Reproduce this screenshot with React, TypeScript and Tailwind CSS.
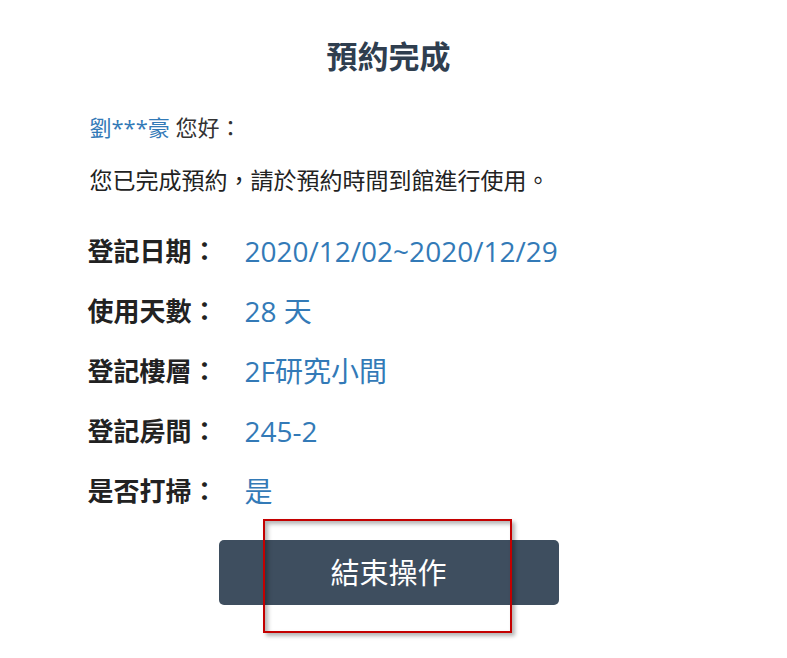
import React from "react";

const CJK = "font-['Open_Sans','Noto_Sans_CJK_TC',sans-serif]";

const rows: { label: string; value: string }[] = [
  { label: "登記日期", value: "2020/12/02~2020/12/29" },
  { label: "使用天數", value: "28 天" },
  { label: "登記樓層", value: "2F研究小間" },
  { label: "登記房間", value: "245-2" },
  { label: "是否打掃", value: "是" },
];

export default function App() {
  return (
    <div className={`min-h-[658px] w-full bg-white ${CJK}`}>
      <div className="mx-auto flex w-[602px] -translate-x-[5px] flex-col pt-[36px]">
        {/* 標題 */}
        <h1 className="text-center text-[31px] font-bold leading-[40px] text-[#2f3e4f]">
          預約完成
        </h1>

        {/* 問候 */}
        <p className="mt-[36px] pl-[2px] text-[22px] leading-[30px] text-[#333]">
          <span className="text-[#337ab7]">劉***豪</span> 您好：
        </p>
        <p className="mt-[23px] pl-[2px] text-[23px] leading-[30px] text-[#222]">
          您已完成預約，請於預約時間到館進行使用。
        </p>

        {/* 預約資訊 */}
        <div className="mt-[36px] flex flex-col gap-[20px]">
          {rows.map((r) => (
            <div key={r.label} className="flex items-center leading-[40px]">
              <span className="w-[157px] shrink-0 text-[26px] font-bold text-[#222]">
                {r.label}：
              </span>
              <span className="text-[28px] text-[#337ab7]">{r.value}</span>
            </div>
          ))}
        </div>

        {/* 按鈕 */}
        <div className="relative mt-[29px] self-center">
          <button className="h-[65px] w-[340px] rounded-[5px] bg-[#3e4e5f] text-[29px] text-white">
            結束操作
          </button>
          {/* 標註框 */}
          <div className="pointer-events-none absolute left-[44px] top-[-21px] h-[114px] w-[249px] border-2 border-[#c40000] shadow-[3px_3px_4px_rgba(0,0,0,0.3),inset_3px_3px_4px_rgba(0,0,0,0.3)]" />
        </div>
      </div>
    </div>
  );
}
